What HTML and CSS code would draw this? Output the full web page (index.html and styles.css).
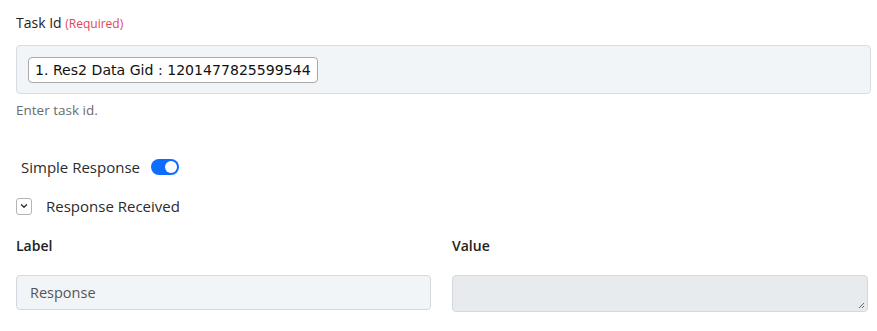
FILE: index.html
```html
<!DOCTYPE html>
<html>
<head>
  <title>Task Id</title>
  <link rel="stylesheet" href="styles.css">
</head>
<body>
  <!-- Task id field -->
  <div class="field">
    <label class="field-label">Task Id <span class="required">(Required)</span></label>
    <div class="tag-box">
      <span class="tag">1. Res2 Data Gid : 1201477825599544</span>
    </div>
    <div class="hint">Enter task id.</div>
  </div>

  <!-- Simple response toggle -->
  <div class="toggle-row">
    <span>Simple Response</span>
    <span class="switch on"><span class="knob"></span></span>
  </div>

  <!-- Collapsible response section -->
  <div class="collapse-row">
    <span class="chevron-box">
      <svg width="10" height="10" viewBox="0 0 10 10"><path d="M2.5 3.8 L5 6.3 L7.5 3.8" fill="none" stroke="#333" stroke-width="1.4" stroke-linecap="round" stroke-linejoin="round"/></svg>
    </span>
    <span>Response Received</span>
  </div>

  <div class="pair">
    <div class="col">
      <div class="col-head">Label</div>
      <div class="label-input">Response</div>
    </div>
    <div class="col">
      <div class="col-head">Value</div>
      <div class="value-input">
        <svg class="grip" width="8" height="8" viewBox="0 0 8 8"><path d="M7 2 L2 7 M7 5 L5 7" stroke="#666" stroke-width="1"/></svg>
      </div>
    </div>
  </div>
</body>
</html>
```

FILE: styles.css
```css
body {
  margin: 0;
  padding: 14px 6px 0 16px;
  font-family: "Open Sans", Lato, sans-serif;
  font-size: 14px;
  color: #2b2b2b;
  background: #fff;
}
.field-label {
  display: block;
  font-size: 14px;
  line-height: 18px;
  color: #222;
}
.required {
  font-size: 12px;
  color: #e2455a;
}
.tag-box {
  margin-top: 12px;
  height: 49px;
  border: 1px solid #d8dde3;
  border-radius: 4px;
  background: #f2f5f8;
  box-sizing: border-box;
  display: flex;
  align-items: center;
  padding-left: 11px;
}
.tag {
  font-family: "DejaVu Sans", Verdana, sans-serif;
  font-size: 14.1px;
  line-height: 17px;
  color: #111;
  background: #fff;
  border: 1px solid #a9a9a9;
  border-radius: 4px;
  padding: 4px 6px 3px 6px;
}
.hint {
  margin-top: 7px;
  font-size: 13.5px;
  color: #6b6b6b;
}
.toggle-row {
  margin-top: 38px;
  padding-left: 5px;
  display: flex;
  align-items: center;
  gap: 11px;
  font-size: 15px;
}
.switch {
  width: 28px;
  height: 16px;
  border-radius: 8px;
  background: #0d6efd;
  display: flex;
  align-items: center;
  justify-content: flex-end;
  padding: 0 2px;
  box-sizing: border-box;
}
.knob {
  width: 12px;
  height: 12px;
  border-radius: 50%;
  background: #fff;
}
.collapse-row {
  margin-top: 19px;
  display: flex;
  align-items: center;
  gap: 14px;
  font-size: 15px;
}
.chevron-box {
  width: 14px;
  height: 15px;
  border: 1px solid #b5b5b5;
  border-radius: 3px;
  display: flex;
  align-items: center;
  justify-content: center;
}
.pair {
  margin-top: 20px;
  display: grid;
  grid-template-columns: 415px 416px;
  gap: 21px;
}
.col-head {
  font-weight: 600;
  font-size: 14px;
  color: #222;
}
.label-input {
  margin-top: 20px;
  height: 35px;
  border: 1px solid #d3d8de;
  border-radius: 4px;
  background: #f2f5f8;
  box-sizing: border-box;
  padding-left: 13px;
  display: flex;
  align-items: center;
  font-size: 14.5px;
  color: #555;
}
.value-input {
  margin-top: 20px;
  height: 37px;
  border: 1px solid #d3d8de;
  border-radius: 4px;
  background: #e8ebee;
  box-sizing: border-box;
  position: relative;
}
.grip {
  position: absolute;
  right: 2px;
  bottom: 2px;
}
```
